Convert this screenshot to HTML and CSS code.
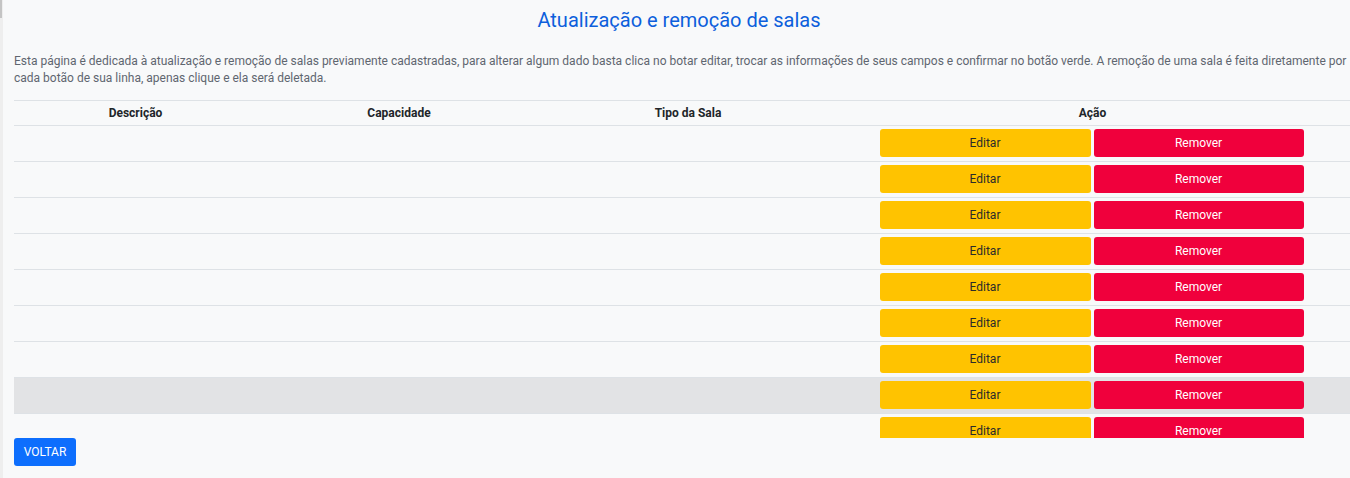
FILE: index.html
```html
<!DOCTYPE html>
<html lang="pt-BR">
<head>
<meta charset="utf-8">
<title>Atualização e remoção de salas</title>
<link rel="stylesheet" href="styles.css">
</head>
<body>
<div class="layout">
  <div class="rail"><div class="rail-thumb"></div></div>
  <main class="main">
    <h1 class="title">Atualização e remoção de salas</h1>
    <p class="lead">Esta página é dedicada à atualização e remoção de salas previamente cadastradas, para alterar algum dado basta clica no botar editar, trocar as informações de seus campos e confirmar no botão verde. A remoção de uma sala é feita diretamente por cada botão de sua linha, apenas clique e ela será deletada.</p>
    <div class="table-wrap">
      <table class="rooms">
        <colgroup>
          <col class="c1"><col class="c2"><col class="c3"><col class="c4">
        </colgroup>
        <thead>
          <tr><th>Descrição</th><th>Capacidade</th><th>Tipo da Sala</th><th>Ação</th></tr>
        </thead>
        <tbody>
          <tr><td></td><td></td><td></td><td><div class="actions"><button class="btn btn-edit">Editar</button><button class="btn btn-remove">Remover</button></div></td></tr>
          <tr><td></td><td></td><td></td><td><div class="actions"><button class="btn btn-edit">Editar</button><button class="btn btn-remove">Remover</button></div></td></tr>
          <tr><td></td><td></td><td></td><td><div class="actions"><button class="btn btn-edit">Editar</button><button class="btn btn-remove">Remover</button></div></td></tr>
          <tr><td></td><td></td><td></td><td><div class="actions"><button class="btn btn-edit">Editar</button><button class="btn btn-remove">Remover</button></div></td></tr>
          <tr><td></td><td></td><td></td><td><div class="actions"><button class="btn btn-edit">Editar</button><button class="btn btn-remove">Remover</button></div></td></tr>
          <tr><td></td><td></td><td></td><td><div class="actions"><button class="btn btn-edit">Editar</button><button class="btn btn-remove">Remover</button></div></td></tr>
          <tr><td></td><td></td><td></td><td><div class="actions"><button class="btn btn-edit">Editar</button><button class="btn btn-remove">Remover</button></div></td></tr>
          <tr class="is-hover"><td></td><td></td><td></td><td><div class="actions"><button class="btn btn-edit">Editar</button><button class="btn btn-remove">Remover</button></div></td></tr>
          <tr><td></td><td></td><td></td><td><div class="actions"><button class="btn btn-edit">Editar</button><button class="btn btn-remove">Remover</button></div></td></tr>
          <tr><td></td><td></td><td></td><td><div class="actions"><button class="btn btn-edit">Editar</button><button class="btn btn-remove">Remover</button></div></td></tr>
          <tr><td></td><td></td><td></td><td><div class="actions"><button class="btn btn-edit">Editar</button><button class="btn btn-remove">Remover</button></div></td></tr>
          <tr><td></td><td></td><td></td><td><div class="actions"><button class="btn btn-edit">Editar</button><button class="btn btn-remove">Remover</button></div></td></tr>
          <tr><td></td><td></td><td></td><td><div class="actions"><button class="btn btn-edit">Editar</button><button class="btn btn-remove">Remover</button></div></td></tr>
          <tr><td></td><td></td><td></td><td><div class="actions"><button class="btn btn-edit">Editar</button><button class="btn btn-remove">Remover</button></div></td></tr>
          <tr><td></td><td></td><td></td><td><div class="actions"><button class="btn btn-edit">Editar</button><button class="btn btn-remove">Remover</button></div></td></tr>
          <tr><td></td><td></td><td></td><td><div class="actions"><button class="btn btn-edit">Editar</button><button class="btn btn-remove">Remover</button></div></td></tr>
          <tr><td></td><td></td><td></td><td><div class="actions"><button class="btn btn-edit">Editar</button><button class="btn btn-remove">Remover</button></div></td></tr>
          <tr><td></td><td></td><td></td><td><div class="actions"><button class="btn btn-edit">Editar</button><button class="btn btn-remove">Remover</button></div></td></tr>
          <tr><td></td><td></td><td></td><td><div class="actions"><button class="btn btn-edit">Editar</button><button class="btn btn-remove">Remover</button></div></td></tr>
          <tr><td></td><td></td><td></td><td><div class="actions"><button class="btn btn-edit">Editar</button><button class="btn btn-remove">Remover</button></div></td></tr>
        </tbody>
      </table>
    </div>
    <button class="btn btn-back">VOLTAR</button>
  </main>
</div>
</body>
</html>
```

FILE: styles.css
```css
html, body {
  margin: 0;
  padding: 0;
  height: 100%;
  overflow: hidden;
}

body {
  background: #f8f9fa;
  font-family: Roboto, "Liberation Sans", sans-serif;
  color: #212529;
}

.layout {
  display: flex;
  height: 100%;
}

.rail {
  width: 3px;
  flex: none;
  background: #eeeeee;
}

.rail-thumb {
  width: 2px;
  height: 18px;
  background: #c4c4c4;
}

.main {
  flex: 1;
  min-width: 0;
  padding: 0 0 0 11px;
}

.title {
  margin: 0;
  padding: 8px 6px 0 0;
  font-size: 20px;
  line-height: 24px;
  font-weight: 400;
  text-align: center;
  color: #0d5fdc;
}

.lead {
  margin: 21px 0 13px;
  font-size: 12px;
  line-height: 17px;
  color: #5f6670;
}

.table-wrap {
  height: 338px;
  overflow-y: scroll;
}

.table-wrap::-webkit-scrollbar {
  width: 2px;
}

.table-wrap::-webkit-scrollbar-track {
  background: #ececec;
}

.table-wrap::-webkit-scrollbar-thumb {
  background: #c1c1c1;
}

.rooms {
  width: 100%;
  border-collapse: collapse;
  table-layout: fixed;
  font-size: 12px;
}

.c1 { width: 243px; }
.c2 { width: 284px; }
.c3 { width: 294px; }

.rooms th {
  height: 24px;
  padding: 0;
  font-weight: 700;
  text-align: center;
  border-top: 1px solid #dee2e6;
  border-bottom: 1px solid #dee2e6;
  color: #212529;
}

.rooms td {
  height: 28px;
  padding: 3px 0 4px;
  border-bottom: 1px solid #dee2e6;
}

.rooms tr.is-hover td {
  background: #e2e3e5;
}

.actions {
  display: flex;
  justify-content: center;
  gap: 3px;
  padding-right: 2px;
}

.btn {
  border: none;
  border-radius: 3px;
  font-family: Roboto, "Liberation Sans", sans-serif;
  font-size: 12px;
  height: 28px;
  line-height: 28px;
  padding: 0;
  cursor: pointer;
}

.btn-edit {
  width: 211px;
  background: #ffc300;
  color: #2b2b2b;
}

.btn-remove {
  width: 210px;
  background: #f0003c;
  color: #ffffff;
}

.btn-back {
  display: block;
  width: 62px;
  background: #0d6efd;
  color: #ffffff;
}
```
